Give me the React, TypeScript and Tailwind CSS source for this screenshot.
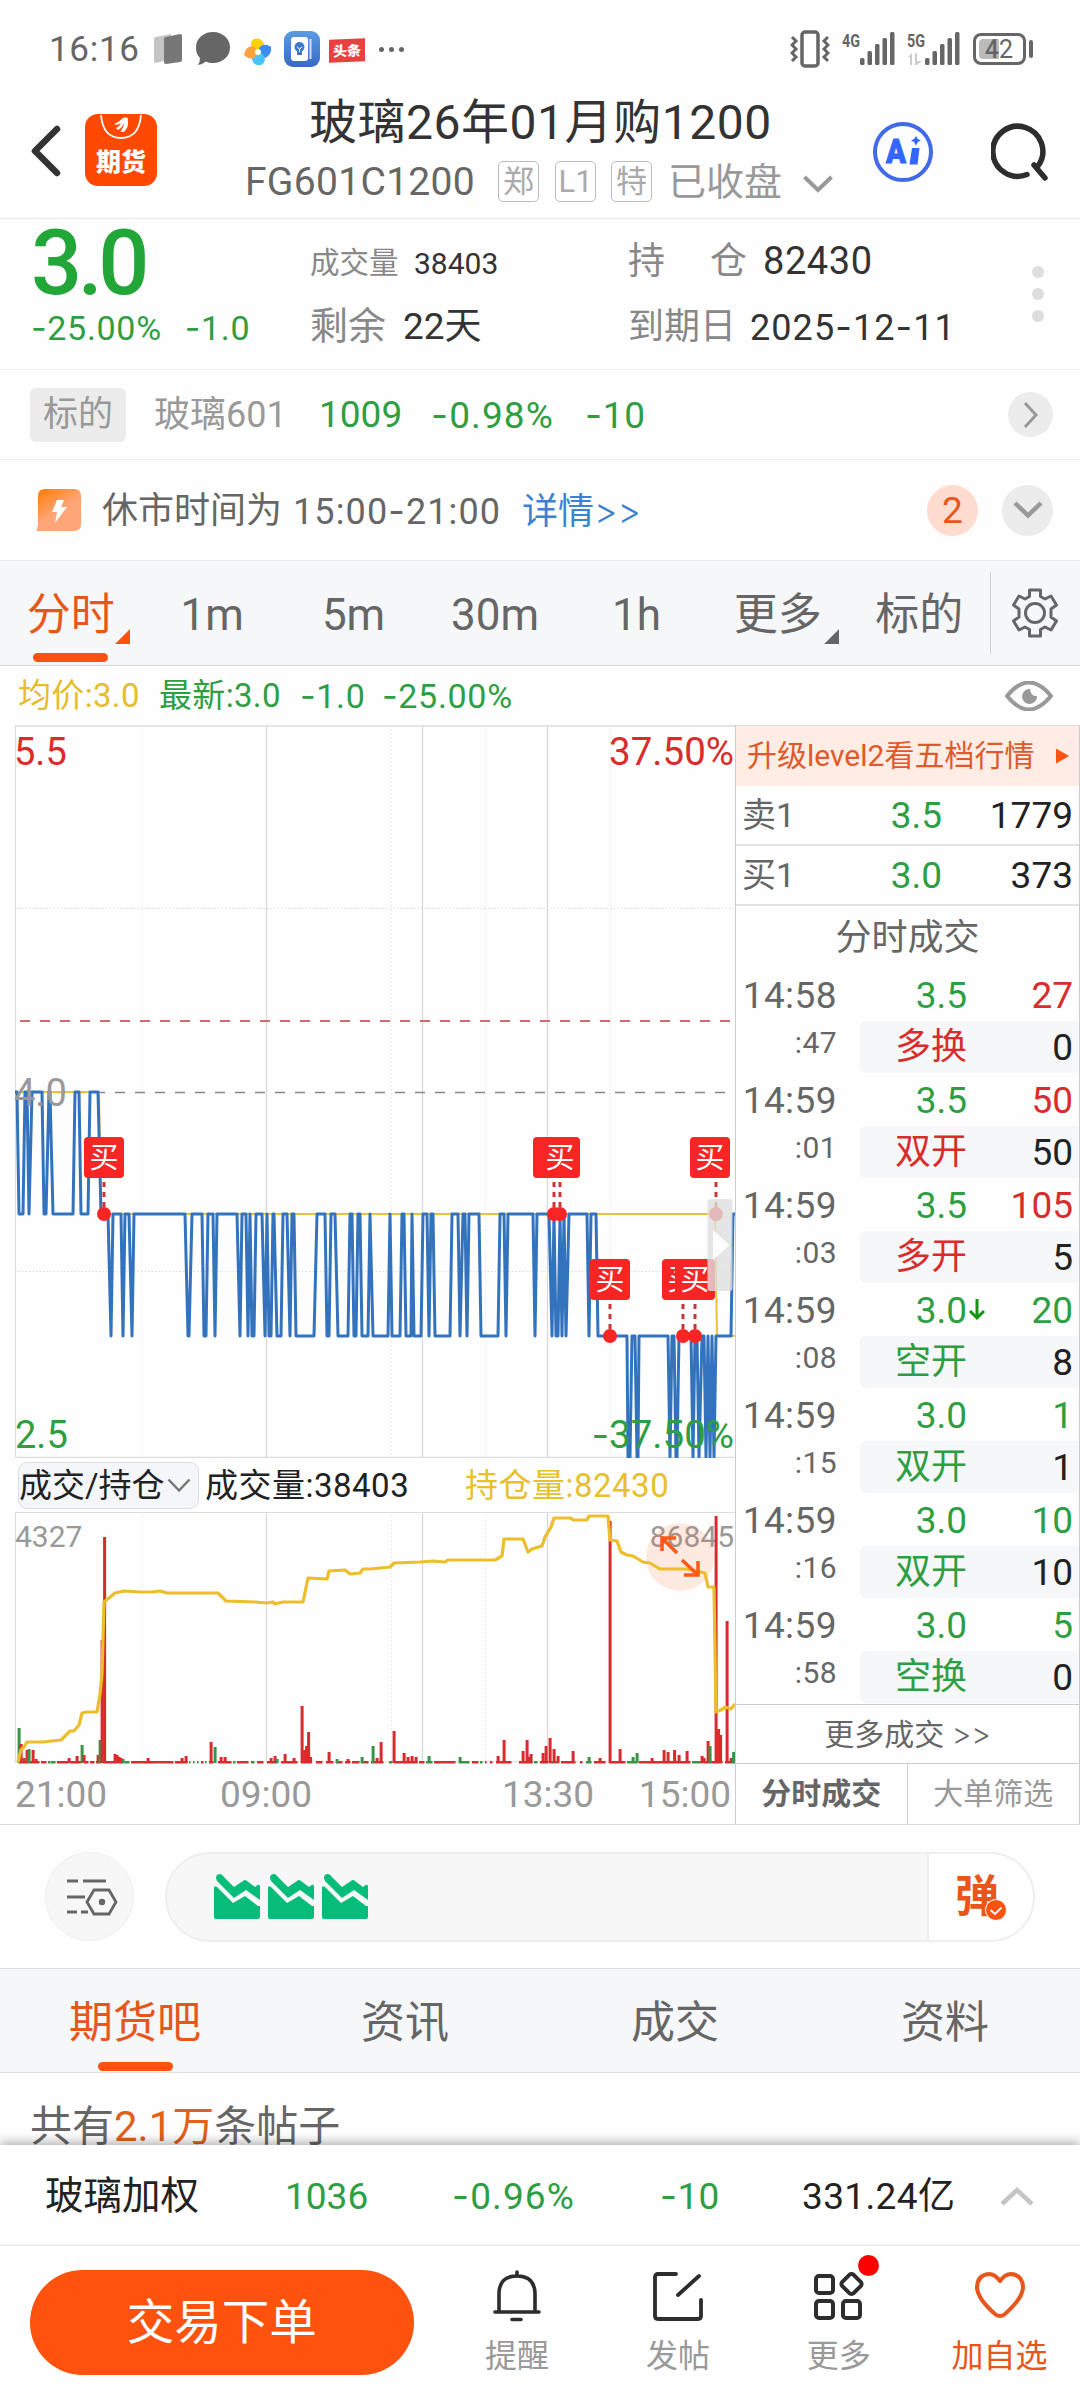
import { Fragment } from "react";

const GREEN = "text-[#2e9e43]";
const RED = "text-[#d92c2c]";

// y of each price level in the price pane
const LEVEL: Record<string, number> = { A: 367, B: 489, C: 611, D: 732 };

const PRICE =
  "15A 17A 19B 23B 25A 27A 29B 32A 42A 44B 46B 49A 50A 53B 73B 75A 79A 81B 88B 90A 98A 101B 108B 111C 113B 121B 123C 125B 129B 132C 134B 185B 188C 189C 192B 202B 204C 206C 208B 213B 215C 217B 237B 240C 242B 246B 248C 250B 252C 254C 256B 262B 265C 267B 269C 271C 273B 274B 277C 281C 283B 287B 290C 292B 294B 296C 314C 317B 325B 327C 329C 331B 335B 338C 348C 350B 352B 354C 356C 358B 360B 362C 368C 370B 373C 388C 390B 392C 400C 402B 404B 406C 411C 412B 414C 421C 423B 427B 429C 431B 433B 435C 450C 452B 458B 460C 463B 465B 467C 469B 479B 481C 498C 500B 504B 506C 508B 533B 535C 537B 549B 552C 554B 556C 558C 560B 562C 564B 566C 569B 587B 589C 591B 596B 598C 627C 628D 630D 632C 635C 637D 638D 639C 668C 670D 672C 674C 676D 677D 679C 691C 693D 695C 697C 699D 702C 704C 706D 708C 710D 712C 714D 716C 731C 733B 735B";

const AVG = "M15 367H99L101 489H715L717 611H735";

const MARKS = [
  { dot: 104, box: 84, level: "B" },
  { dot: 554, box: 533, level: "B" },
  { dot: 560, box: 540, level: "B" },
  { dot: 716, box: 690, level: "B" },
  { dot: 610, box: 590, level: "C" },
  { dot: 683, box: 662, level: "C" },
  { dot: 695, box: 675, level: "C" },
];

// volume bars: [x, height, 1 = green]
const BARS: number[][] = [
  [19, 35, 1], [21, 19], [24, 5], [27, 13], [29, 14, 1], [33, 13], [36, 4], [69, 5], [77, 7], [82, 18, 1], [84, 8], [98, 8],
  [100, 23, 1], [102, 123], [104.5, 226], [115, 9], [117, 8], [119, 6], [121, 5], [123, 4, 1], [148, 5], [182, 5], [186, 7],
  [211, 21], [215, 16, 1], [221, 6], [225, 6], [271, 5], [275, 7], [277, 4, 1], [285, 9], [294, 5], [302, 57], [304.5, 13],
  [306.5, 17], [308.5, 31], [310.5, 6], [329, 11], [337, 4, 1], [348, 4], [362, 6, 1], [373, 17, 1], [377, 5], [381, 21],
  [394, 32], [404, 10], [408, 6], [412, 7], [416, 6], [429, 7, 1], [460, 6, 1], [498, 7], [504, 23], [523, 12], [527, 23],
  [529, 6], [531, 9], [543, 10], [546, 17], [550, 25], [554, 14], [558, 7], [573, 12], [589, 6, 1], [600, 5], [610, 242],
  [620, 14], [633, 6, 1], [637, 10, 1], [652, 5], [664, 13], [668, 11], [674.5, 13], [679, 8], [687, 12], [702, 7],
  [704, 5], [708, 22], [710, 17, 1], [716, 247], [718.5, 34], [720.5, 28], [727, 142], [731, 5], [733.5, 11, 1],
];

// thin base row of tiny volumes: [from, to, 1 = green]
const BASE: number[][] = [
  [19, 39], [41, 46], [48, 50, 1], [51, 55, 1], [57, 68], [70, 81], [84, 88], [90, 94], [96, 101], [103, 124], [125, 129, 1],
  [131, 173], [175, 187], [189, 190, 1], [193, 194, 1], [197, 198, 1], [201, 203], [205, 206, 1], [209, 213], [218, 231],
  [233, 235, 1], [237, 248], [251, 254, 1], [257, 263], [267, 277], [281, 297], [301, 311], [316, 322], [326, 333], [336, 342],
  [345, 350], [352, 359], [361, 368], [371, 383], [389, 392, 1], [394, 417], [419, 424], [426, 432, 1], [434, 455],
  [459, 469, 1], [472, 478], [480, 482, 1], [485, 486], [490, 492], [496, 511], [519, 532], [534, 537, 1], [540, 548],
  [550, 558, 1], [561, 575], [580, 582], [586, 591, 1], [594, 605], [609, 625], [627, 637, 1], [639, 690], [692, 702, 1],
  [704, 722], [725, 735],
];

const OPEN_INTEREST =
  "18,250 21,238 24,235 27,230 43,230 61,228 70,219 74,219 79,213 82,201 87,200 97,200 100,182 102,162 104,90 115,81 124,79 140,80 152,80 160,79 167,81 218,81 226,89 255,90 267,91 273,90 275,92 283,90 303,90 308,66 327,67 329,59 345,58 350,62 360,61 363,57 370,57 390,55 394,51 420,50 433,49 445,50 448,48 495,48 502,44 504,27 523,27 528,40 532,37 542,34 545,25 551,15 554,6 570,6 574,8 587,8 589,4 608,4 610,28 617,29 621,40 627,43 633,44 643,50 650,51 660,57 687,57 705,61 708,75 714,75 716,200 723,197 725,195 731,197 735,192";

const TRADES = [
  { time: "14:58", sec: ":47", price: "3.5", vol: "27", kind: "多换", diff: "0", color: RED },
  { time: "14:59", sec: ":01", price: "3.5", vol: "50", kind: "双开", diff: "50", color: RED },
  { time: "14:59", sec: ":03", price: "3.5", vol: "105", kind: "多开", diff: "5", color: RED },
  { time: "14:59", sec: ":08", price: "3.0", vol: "20", kind: "空开", diff: "8", color: GREEN, down: true },
  { time: "14:59", sec: ":15", price: "3.0", vol: "1", kind: "双开", diff: "1", color: GREEN },
  { time: "14:59", sec: ":16", price: "3.0", vol: "10", kind: "双开", diff: "10", color: GREEN },
  { time: "14:59", sec: ":58", price: "3.0", vol: "5", kind: "空换", diff: "0", color: GREEN },
];

// Roboto's hyphen is too short for signs and dates, so it is set in Inter
function Num({ children }: { children: string }) {
  return (
    <>
      {children.split("-").map((part, i) => (
        <Fragment key={i}>
          {i > 0 && <span className="font-['Inter']">-</span>}
          {part}
        </Fragment>
      ))}
    </>
  );
}

function Signal({ label, arrows }: { label: string; arrows?: boolean }) {
  return (
    <svg width="54" height="36" viewBox="0 0 54 36" fill="#666">
      <text x="0" y="16" fontSize="19" fontWeight="700" textLength="18" lengthAdjust="spacingAndGlyphs" fontFamily="Roboto">
        {label}
      </text>
      {arrows && <path d="M1 26L5 22V34H3V26ZM8 22H10V30H15L10 34H8Z" fill="#ccc" />}
      <rect x="18" y="27" width="4.5" height="7" rx="1.5" />
      <rect x="25.500" y="20" width="4.500" height="14" rx="1.5" />
      <rect x="33" y="13" width="4.500" height="21" rx="1.5" />
      <rect x="40.500" y="7" width="4.500" height="27" rx="1.5" />
      <rect x="48" y="1" width="4.500" height="33" rx="1.5" />
    </svg>
  );
}

function StatusBar() {
  return (
    <div className="flex h-[98px] items-center pl-[49px] text-[#666]">
      <span className="w-[105px] text-[35px] tracking-[0.02em]">16:16</span>
      <svg width="28" height="30" viewBox="0 0 28 30">
        <path d="M2 3L17 0V25L2 29Q0 29 0 27V5Q0 3 2 3Z" fill="#c4c4c4" />
        <path d="M12 3L26 0Q28 0 28 2V26Q28 28 26 28L12 30Q10 30 10 28V5Q10 3 12 3Z" fill="#777" />
      </svg>
      <svg className="ml-[14px]" width="34" height="34" viewBox="0 0 34 34" fill="#666">
        <path d="M17 0C26 0 34 6 34 15.500S26 31 17 31C14 31 12 30.500 10 29.500Q7 32 2 33Q4 30 4 26C1 23 0 20 0 15.500C0 6 8 0 17 0Z" />
      </svg>
      <svg className="mt-[6px] ml-[14px]" width="28" height="28" viewBox="0 0 28 28">
        <path d="M14 14C6 12 5 4 10 1Q17 -1 20 6Q19 10 14 14Z" fill="#ffcf0a" />
        <path d="M14 14C15 6 22 5 27 9Q28 18 20 20Q16 18 14 14Z" fill="#3c8cf5" />
        <path d="M14 14C22 16 23 24 17 27Q9 28 8 21Q9 17 14 14Z" fill="#49c3f8" />
        <path d="M14 14C12 22 5 22 0 17Q1 9 8 8Q12 10 14 14Z" fill="#fba23c" />
        <circle cx="14" cy="14" r="3" fill="#fff" />
      </svg>
      <span className="ml-[12px] flex h-[36px] w-[36px] items-center justify-center rounded-[9px] bg-linear-to-b from-[#5b9be0] to-[#3969c6]">
        <svg width="24" height="26" viewBox="0 0 24 26">
          <rect x="1" y="1" width="17" height="24" rx="3" fill="#fff" />
          <path d="M20.500 3V23" stroke="#cfe0f8" strokeWidth="2" />
          <circle cx="9.500" cy="11" r="5" fill="#3f78d0" />
          <rect x="7" y="15" width="5" height="4" fill="#3f78d0" />
          <path d="M7 11L9.500 13L12 11M9.500 13V16" stroke="#fff" fill="none" />
        </svg>
      </span>
      <span className="mt-[3px] ml-[9px] flex h-[23px] w-[36px] -skew-y-2 items-center justify-center bg-[#e9413f] text-[14px] font-black text-white">头条</span>
      <span className="ml-[14px] flex gap-[5px]">
        <i className="h-[5px] w-[5px] rounded-full bg-[#666]" />
        <i className="h-[5px] w-[5px] rounded-full bg-[#666]" />
        <i className="h-[5px] w-[5px] rounded-full bg-[#666]" />
      </span>
      <svg className="ml-[386px]" width="40" height="38" viewBox="0 0 40 38" fill="none" stroke="#666" strokeWidth="3">
        <rect x="12" y="2" width="16" height="34" rx="3" strokeWidth="3.500" />
        <path d="M2 7L6 11L2 15L6 19L2 23L6 27L2 31M38 7L34 11L38 15L34 19L38 23L34 27L38 31" />
      </svg>
      <span className="ml-[12px] flex gap-[11px]">
        <Signal label="4G" />
        <Signal label="5G" arrows />
      </span>
      <span className="ml-[12px] flex h-[32px] w-[53px] items-center rounded-[8px] border-3 border-[#666] p-[3px]">
        <span className="flex h-[20px] w-[20px] items-center justify-end rounded-l-[4px] bg-[#bbb] text-[25px] font-medium">4</span>
        <span className="text-[25px]">2</span>
      </span>
      <i className="ml-[3px] h-[18px] w-[4px] rounded bg-[#666]" />
    </div>
  );
}

function Header() {
  return (
    <div className="flex h-[121px] border-b border-[#eee]">
      <div className="flex w-[190px] items-start pt-[16px] pl-[30px]">
        <svg className="mt-[10px]" width="32" height="54" viewBox="0 0 32 54" fill="none" stroke="#333" strokeWidth="6.500" strokeLinecap="round" strokeLinejoin="round">
          <path d="M27 5L5 27L27 49" />
        </svg>
        <svg className="ml-[23px]" width="72" height="72" viewBox="0 0 72 72">
          <rect width="72" height="72" rx="13" fill="#ff4800" />
          <path d="M16 1Q18 24 36 24Q54 24 56 1" fill="none" stroke="#fff" strokeWidth="1.800" />
          <path d="M29 10Q34 8 38 4Q43 2 43 6Q44 13 39 18L35 18Q39 13 39 9Q37 14 33 16L31 14Q35 12 36 9Q32 12 29 10Z" fill="#fff" />
          <text x="36" y="57" fontSize="25" fontWeight="900" fill="#fff" textAnchor="middle" fontFamily="Noto Sans CJK SC">
            期货
          </text>
        </svg>
      </div>
      <div className="flex w-[670px] flex-col">
        <div className="mt-px ml-[119px] text-[48px] tracking-[0.011em] text-[#333]">玻璃26年01月购1200</div>
        <div className="mt-[14px] ml-[55px] flex items-center text-[39px] text-[#666]">
          <span className="w-[253px] pt-[2px] tracking-[0.008em]">FG601C1200</span>
          <span className="flex h-[41px] w-[41px] items-center justify-center rounded-[5px] border border-[#bbb] text-[31px] text-[#aaa]">郑</span>
          <span className="ml-[16px] flex h-[41px] w-[41px] items-center justify-center rounded-[5px] border border-[#bbb] text-[31px] text-[#aaa]">L1</span>
          <span className="ml-[15px] flex h-[41px] w-[41px] items-center justify-center rounded-[5px] border border-[#bbb] text-[31px] text-[#aaa]">特</span>
          <span className="ml-[16px] text-[38px] text-[#999]">已收盘</span>
          <svg className="mt-1 ml-[21px]" width="30" height="18" viewBox="0 0 30 18" fill="none" stroke="#999" strokeWidth="4">
            <path d="M1.500 2L15 15L28.500 2" />
          </svg>
        </div>
      </div>
      <svg className="mt-[23px] ml-[13px]" width="60" height="62" viewBox="0 0 60 62">
        <circle cx="30" cy="31" r="28" fill="none" stroke="#4169e8" strokeWidth="4" />
        <text x="13" y="42" fontSize="34" fontWeight="900" fill="#3366ff" stroke="#3366ff" textLength="20" lengthAdjust="spacingAndGlyphs" fontFamily="Roboto">
          A
        </text>
        <path d="M39 27H46.500L44.500 43.500H36.500Z" fill="#3366ff" />
        <path d="M43 15L44.800 18L48 19.500L44.800 21L43 24.500L41 21L38 19.500L41 18Z" fill="#3366ff" />
      </svg>
      <svg className="mt-[24px] ml-[58px]" width="60" height="62" viewBox="0 0 60 62" fill="none" stroke="#2d2d2d" strokeWidth="5.500" strokeLinecap="round">
        <path d="M36 52.500A25 25 0 1 1 47 44M43 43L54 56" />
      </svg>
    </div>
  );
}

function Quote() {
  return (
    <div className="flex h-[151px] border-b border-[#f3f3f3]">
      <div className={`w-[310px] pl-[31px] ${GREEN}`}>
        <div className="h-[89px] text-[90px] font-medium tracking-[-0.05em] text-[#21a637]">3.0</div>
        <div className="mt-[3px] flex gap-[23px] text-[34px] tracking-[0.02em]">
          <span>
            <Num>-25.00%</Num>
          </span>
          <span>
            <Num>-1.0</Num>
          </span>
        </div>
      </div>
      <div className="w-[318px] text-[#333]">
        <div className="mt-[29px] flex h-[32px] items-center text-[30px]">
          <span className="w-[104px] text-[29.500px] text-[#888]">成交量</span>
          38403
        </div>
        <div className="mt-[26px] flex h-[40px] items-center text-[37px]">
          <span className="w-[93px] text-[38px] text-[#888]">剩余</span>
          22天
        </div>
      </div>
      <div className="w-[400px] text-[#333]">
        <div className="mt-[22px] flex h-[40px] items-center text-[38px] tracking-[0.015em]">
          <span className="flex w-[119px] justify-between text-[37px] tracking-normal text-[#888]">
            <span>持</span>
            <span>仓</span>
          </span>
          <span className="ml-[16px]">82430</span>
        </div>
        <div className="mt-[26px] flex h-[40px] items-center text-[36px] tracking-[0.03em]">
          <span className="w-[122px] tracking-normal text-[#888]">到期日</span>
          <span>
            <Num>2025-12-11</Num>
          </span>
        </div>
      </div>
      <div className="mt-[47px] ml-[4px] flex flex-col gap-[10px]">
        <i className="h-[12px] w-[12px] rounded-full bg-[#ddd]" />
        <i className="h-[12px] w-[12px] rounded-full bg-[#ddd]" />
        <i className="h-[12px] w-[12px] rounded-full bg-[#ddd]" />
      </div>
    </div>
  );
}

function Underlying() {
  return (
    <div className={`flex h-[90px] items-center border-b border-[#eee] pl-[30px] text-[37px] ${GREEN}`}>
      <span className="flex h-[54px] w-[96px] items-center justify-center rounded-[6px] bg-[#ececec] text-[35px] text-[#999]">标的</span>
      <span className="ml-[28px] w-[165px] text-[36px] text-[#999]">玻璃601</span>
      <span className="w-[112px]">1009</span>
      <span className="w-[154px] tracking-[0.03em]">
        <Num>-0.98%</Num>
      </span>
      <span className="w-[423px] tracking-[0.02em]">
        <Num>-10</Num>
      </span>
      <span className="flex h-[45px] w-[45px] items-center justify-center rounded-full bg-[#ececec]">
        <svg width="16" height="26" viewBox="0 0 16 26" fill="none" stroke="#999" strokeWidth="3">
          <path d="M2 1L13 13L2 25" />
        </svg>
      </span>
    </div>
  );
}

function Notice() {
  return (
    <div className="flex h-[101px] items-center border-b border-[#eee] pl-[36px] text-[36px] text-[#666]">
      <svg width="46" height="44" viewBox="0 0 46 44">
        <defs>
          <linearGradient id="bolt" x1="0" y1="0" x2="0.7" y2="1">
            <stop offset="0" stopColor="#ff7a00" />
            <stop offset="0.6" stopColor="#ffa678" />
            <stop offset="1" stopColor="#ffa678" />
          </linearGradient>
        </defs>
        <path d="M9 1H38Q45 1 45 8V36Q45 43 38 43H0.500L2 37V8Q2 1 9 1Z" fill="url(#bolt)" />
        <path d="M21 12H28L25 19H31L19 35L21 24H16Z" fill="#fff" />
      </svg>
      <span className="ml-[20px] w-[191px] pt-[2px]">休市时间为</span>
      <span className="w-[229px] pt-[2px] tracking-[0.031em]">
        <Num>15:00-21:00</Num>
      </span>
      <span className="w-[405px] pt-[2px] text-[#3b82d0]">
        详情<span className="font-['Inter'] font-light">&gt;&gt;</span>
      </span>
      <span className="flex h-[51px] w-[51px] items-center justify-center rounded-full bg-[#ffdccf] text-[37px] text-[#e8561c]">2</span>
      <span className="ml-[24px] flex h-[51px] w-[51px] items-center justify-center rounded-full bg-[#ececec]">
        <svg width="30" height="18" viewBox="0 0 30 18" fill="none" stroke="#999" strokeWidth="4.500">
          <path d="M2 2L15 14.500L28 2" />
        </svg>
      </span>
    </div>
  );
}

function PeriodTabs() {
  return (
    <div className="flex h-[105px] items-center border-b border-[#d5d9dd] bg-[#f6f7f9] text-[44px] text-[#666]">
      <div className="grid w-[990px] grid-cols-7 pt-[4px] text-center">
        <span className="relative text-[#e8561c]">
          分时
          <i className="absolute top-[36px] left-[115px] h-[15px] w-[15px] bg-[#ff520f] [clip-path:polygon(100%_0,100%_100%,0_100%)]" />
          <i className="absolute top-[60px] left-[33px] h-[9px] w-[75px] rounded-full bg-[#ff520f]" />
        </span>
        <span>1m</span>
        <span>5m</span>
        <span>30m</span>
        <span>1h</span>
        <span className="relative">
          更多
          <i className="absolute top-[36px] left-[117px] h-[15px] w-[15px] bg-[#666] [clip-path:polygon(100%_0,100%_100%,0_100%)]" />
        </span>
        <span>标的</span>
      </div>
      <i className="h-[82px] w-px bg-[#ccd0d4]" />
      <svg className="ml-[20px]" width="48" height="50" viewBox="0 0 48 50" fill="none" stroke="#666" strokeWidth="3" strokeLinejoin="round">
        <path d="M18.500 2H29.500V8.500L34 11L40 8L45.500 17L40 21V29L45.500 33L40 42L34 39L29.500 41.500V48H18.500V41.500L14 39L8 42L2.500 33L8 29V21L2.500 17L8 8L14 11L18.500 8.500Z" />
        <circle cx="24" cy="25" r="9.500" />
      </svg>
    </div>
  );
}

function AverageBar() {
  return (
    <div className={`flex h-[59px] items-center pl-[18px] text-[33px] ${GREEN}`}>
      <span className="w-[141px] tracking-[0.01em] text-[#e6bd2c]">均价:3.0</span>
      <span className="w-[141px] tracking-[0.01em]">最新:3.0</span>
      <span className="w-[82px] text-[34px] tracking-[0.02em]">
        <Num>-1.0</Num>
      </span>
      <span className="w-[623px] text-[34px] tracking-[0.02em]">
        <Num>-25.00%</Num>
      </span>
      <svg width="48" height="30" viewBox="0 0 48 30">
        <path d="M2 15Q24 -12 46 15Q24 42 2 15Z" fill="none" stroke="#999" strokeWidth="4" strokeLinejoin="round" />
        <path d="M25 8A7.500 7.500 0 1 0 32 15Q26 16 25 8Z" fill="#999" />
      </svg>
    </div>
  );
}

function Grid({ height }: { height: number }) {
  return (
    <g>
      <path d={`M266.500 0V${height}M422.500 0V${height}M547.500 0V${height}`} stroke="#d9d9d9" strokeWidth="1.300" />
      <path d={`M142 0V${height}M391.500 0V${height}M485.500 0V${height}M610.500 0V${height}`} stroke="#e6e6e6" strokeDasharray="1.500 2.500" />
      <path d={`M15.500 0V${height}`} stroke="#ddd" />
    </g>
  );
}

function PriceChart() {
  const line = PRICE.split(" ")
    .map((p) => `${p.slice(0, -1)},${LEVEL[p.slice(-1)]}`)
    .join(" ");
  return (
    <svg className="block" width="735" height="733" viewBox="0 0 735 733" fill="none" fontFamily="Roboto, 'Noto Sans CJK SC', sans-serif">
      <Grid height={733} />
      <path d="M15 1H735M15 732.500H735" stroke="#ddd" strokeWidth="1.500" />
      <path d="M15 183.500H735M15 546.500H735" stroke="#ddd" strokeDasharray="1.500 2" />
      <path d="M20 296H735" stroke="#d46a70" strokeWidth="2" strokeDasharray="10 10" />
      <path d="M35 367.500H735" stroke="#888" strokeWidth="1.500" strokeDasharray="10 10" />
      <path d={AVG} stroke="#e8c33c" strokeWidth="2" />
      <polyline points={line} stroke="#3373bd" strokeWidth="3" strokeLinejoin="round" />
      <text x="14" y="381" fontSize="38" fill="#999">4.0</text>
      <text x="14" y="40" fontSize="38" fill="#d92c2c">5.5</text>
      <text x="734" y="40" fontSize="38.500" fill="#d92c2c" textAnchor="end">37.50%</text>
      <text x="15" y="723" fontSize="38" fill="#2e9e43">2.5</text>
      <text x="734" y="723" fontSize="38.500" fill="#2e9e43" textAnchor="end">
        <tspan fontFamily="Inter">-</tspan>37.50%
      </text>
      {MARKS.map((m) => {
        const y = LEVEL[m.level];
        return (
          <g key={m.dot}>
            <path d={`M${m.dot} ${y - 32}V${y - 7}`} stroke="#c93438" strokeWidth="3" strokeDasharray="5 5" />
            <circle cx={m.dot} cy={y} r="7" fill="#f92424" />
            <rect x={m.box} y={y - 77} width="40" height="41" rx="4" fill="#f92424" />
            <text x={m.box + 20} y={y - 46} fontSize="29" fill="#fff" textAnchor="middle">
              买
            </text>
          </g>
        );
      })}
      <rect x="707.500" y="474" width="25" height="92" rx="3" fill="#dedede" fillOpacity="0.8" />
      <path d="M713 505L729.500 520L713 535Z" fill="#fff" fillOpacity="0.9" />
    </svg>
  );
}

function VolumeChart() {
  return (
    <svg className="block" width="735" height="312" viewBox="0 0 735 312" fill="none" fontFamily="Roboto, sans-serif">
      <Grid height={251} />
      <path d="M15 0.500H735" stroke="#ddd" />
      <path d="M15 250H735" stroke="#ddd" />
      <text x="15" y="35" fontSize="30" fill="#999">4327</text>
      <text x="734" y="35" fontSize="30" fill="#999" textAnchor="end">86845</text>
      {BASE.map(([from, to, green]) => (
        <rect key={from} x={from} y="249" width={to - from + 0.5} height="2.500" fill={green ? "#3a9447" : "#d12f33"} />
      ))}
      {BARS.map(([x, h, green]) => (
        <rect key={x} x={x - 1.4} y={251 - h} width="3" height={h} fill={green ? "#3a9447" : "#d92b2e"} />
      ))}
      <circle cx="680" cy="45" r="34" fill="#ff6a33" fillOpacity="0.14" />
      <polyline points={OPEN_INTEREST} stroke="#eebd2b" strokeWidth="3.200" strokeLinejoin="round" />
      <path d="M677 41L662 26M662 39V26H676M682 48L698 63M698 49V63H684" stroke="#fb5a17" strokeWidth="3.500" />
      <g fontSize="37" fill="#999">
        <text x="15" y="295">21:00</text>
        <text x="266" y="295" textAnchor="middle">09:00</text>
        <text x="548" y="295" textAnchor="middle">13:30</text>
        <text x="731" y="295" textAnchor="end">15:00</text>
      </g>
    </svg>
  );
}

function IndicatorBar() {
  return (
    <div className="flex h-[54px] items-center pl-[18px] text-[33px] text-[#222]">
      <span className="flex h-[47px] w-[181px] items-center rounded-[9px] border border-[#dadde5] bg-[#f5f6f9]">
        成交/持仓
        <svg className="ml-[2px]" width="24" height="15" viewBox="0 0 24 15" fill="none" stroke="#777" strokeWidth="2.500">
          <path d="M1.500 1.500L12 12.500L22.500 1.500" />
        </svg>
      </span>
      <span className="ml-[6px] w-[260px] tracking-[0.015em]">成交量:38403</span>
      <span className="tracking-[0.015em] text-[#e8c02c]">持仓量:82430</span>
    </div>
  );
}

function OrderBook() {
  return (
    <div className="flex w-[345px] flex-col border-x border-[#ccc] text-[#666]">
      <div className="flex h-[61px] items-center justify-between border-t border-[#ddd] bg-[#ffece4] pr-[10px] pl-[11px] text-[30px] text-[#e0592a]">
        升级level2看五档行情
        <i className="h-[15px] w-[13px] bg-[#ff520f] [clip-path:polygon(0_0,100%_50%,0_100%)]" />
      </div>
      <div className="flex h-[60px] items-center border-b-2 border-[#e2e2e2] pr-[6px] pl-[6px] text-[37px]">
        <span className="w-[100px] text-[34px]">卖1</span>
        <span className={`w-[100px] text-right ${GREEN}`}>3.5</span>
        <span className="flex-1 text-right text-[#222]">1779</span>
      </div>
      <div className="flex h-[60px] items-center border-b-2 border-[#e2e2e2] pr-[6px] pl-[6px] text-[37px]">
        <span className="w-[100px] text-[34px]">买1</span>
        <span className={`w-[100px] text-right ${GREEN}`}>3.0</span>
        <span className="flex-1 text-right text-[#222]">373</span>
      </div>
      <div className="flex h-[63px] items-center justify-center text-[36px]">分时成交</div>
      {TRADES.map((t) => (
        <div key={t.sec} className="flex h-[105px]">
          <div className="w-[101px] pt-[8px] text-right text-[37px] tracking-[0.012em]">
            {t.time}
            <div className="mt-[14px] text-[30px]">{t.sec}</div>
          </div>
          <div className="ml-[23px] flex-1 text-[37px]">
            <div className="relative flex h-[52px] items-center pr-[6px]">
              <span className={`w-[107px] text-right ${GREEN}`}>{t.price}</span>
              {t.down && (
                <svg className="absolute left-[108px]" width="18" height="22" viewBox="0 0 18 22" fill="none" stroke="#149414" strokeWidth="3">
                  <path d="M9 0V19M2 12L9 19L16 12" />
                </svg>
              )}
              <span className={`flex-1 text-right ${t.color}`}>{t.vol}</span>
            </div>
            <div className="flex h-[52px] items-center rounded-l-[6px] bg-[#f6f7f9] pr-[6px]">
              <span className={`w-[107px] text-right text-[36px] ${t.color}`}>{t.kind}</span>
              <span className="flex-1 text-right text-[#222]">{t.diff}</span>
            </div>
          </div>
        </div>
      ))}
      <div className="flex h-[59px] items-center justify-center border-t border-[#ccc] text-[30px]">
        <span>
          更多成交 <span className="font-['Inter'] font-light">&gt;&gt;</span>
        </span>
      </div>
      <div className="flex h-[61px] border-t border-[#ccc] text-[30px]">
        <span className="flex w-1/2 items-center justify-center border-r border-[#ccc] font-bold">分时成交</span>
        <span className="flex w-1/2 items-center justify-center text-[#999]">大单筛选</span>
      </div>
    </div>
  );
}

function FallingChart() {
  return (
    <svg width="46" height="46" viewBox="0 0 46 46" fill="#05bd78">
      <path d="M0 14Q0 11 3 13L19 29L31 22L44 32L46 32V43Q46 45 44 45H2Q0 45 0 43Z" />
      <path d="M2 4Q2 0 6 0Q8 0 10 3L20 13L29 7Q31 5 33 7L41 13Q46 8 46 13V26L32 16L20 24L3 7Z" />
    </svg>
  );
}

function ChatBar() {
  return (
    <div className="flex h-[144px] items-center border-t border-[#ddd] pl-[45px]">
      <span className="flex h-[89px] w-[89px] items-center justify-center rounded-full border border-[#eee] bg-[#f7f7f7]">
        <svg className="ml-[5px]" width="52" height="40" viewBox="0 0 52 40" fill="none" stroke="#666" strokeWidth="2.800">
          <path d="M1 4H12M17 4H40M1 20H19M1 35H11M15 35H22" />
          <path d="M21 25L28 13H43L50 25L43 37H28Z" />
          <circle cx="36" cy="25" r="1.800" fill="#666" />
        </svg>
      </span>
      <div className="ml-[31px] flex h-[90px] w-[870px] items-center overflow-hidden rounded-full border-2 border-[#eee] bg-[#f7f7f7] pl-[47px]">
        <span className="flex w-[713px] gap-[8px]">
          <FallingChart />
          <FallingChart />
          <FallingChart />
        </span>
        <span className="relative flex h-[86px] flex-1 items-center border-l-2 border-[#eee] bg-white pl-[26px] text-[44px] font-bold text-[#e8561c]">
          弹
          <svg className="absolute top-[45px] left-[56px]" width="22" height="22" viewBox="0 0 22 22">
            <circle cx="11" cy="11" r="10.500" fill="#ff520f" stroke="#fff" />
            <path d="M5.500 11L10 15L16.500 8.500" fill="none" stroke="#fff" strokeWidth="1.800" />
          </svg>
        </span>
      </div>
    </div>
  );
}

function ContentTabs() {
  return (
    <div className="grid h-[105px] grid-cols-4 items-center border-y border-[#dcdfe3] bg-[#f6f7f9] pt-[5px] text-center text-[44px] text-[#666]">
      <span className="relative text-[#e8561c]">
        期货吧
        <i className="absolute top-[61px] left-[98px] h-[9px] w-[75px] rounded-full bg-[#ff520f]" />
      </span>
      <span>资讯</span>
      <span>成交</span>
      <span>资料</span>
    </div>
  );
}

function BottomBar() {
  return (
    <div className="relative bg-white shadow-[0_-3px_10px_rgba(0,0,0,0.3)]">
      <div className={`flex h-[101px] items-center border-b-2 border-[#eee] pt-[3px] pl-[45px] text-[37px] ${GREEN}`}>
        <span className="w-[240px] text-[38.500px] text-[#222]">玻璃加权</span>
        <span className="w-[167px]">1036</span>
        <span className="w-[208px] tracking-[0.03em]">
          <Num>-0.96%</Num>
        </span>
        <span className="w-[142px] tracking-[0.01em]">
          <Num>-10</Num>
        </span>
        <span className="w-[198px] tracking-[0.01em] text-[#222]">331.24亿</span>
        <svg width="34" height="20" viewBox="0 0 34 20" fill="none" stroke="#c4c4c4" strokeWidth="4.500">
          <path d="M2 18L17 4L32 18" />
        </svg>
      </div>
      <div className="flex h-[154px] pl-[30px] text-[32px] text-[#999]">
        <button className="mt-[24px] flex h-[105px] w-[384px] items-center justify-center rounded-full bg-[#ff520f] pt-[2px] text-[47.500px] text-white">交易下单</button>
        <div className="ml-[23px] grid w-[644px] grid-cols-4">
          <div className="flex flex-col items-center pt-[24px]">
            <svg width="50" height="52" viewBox="0 0 50 52" fill="none" stroke="#2d2d2d" strokeWidth="3.600" strokeLinecap="round">
              <path d="M25 2V6M3 42H47M7 41V24Q7 6 25 6T43 24V41M20 49.500H29" />
            </svg>
            <span className="mt-[18px]">提醒</span>
          </div>
          <div className="flex flex-col items-center pt-[24px]">
            <svg width="50" height="52" viewBox="0 0 50 52" fill="none" stroke="#2d2d2d" strokeWidth="3.800" strokeLinecap="round" strokeLinejoin="round">
              <path d="M23 4H5Q2 4 2 7V46Q2 49 5 49H45Q48 49 48 46V30M46 6L25 25" />
            </svg>
            <span className="mt-[18px]">发帖</span>
          </div>
          <div className="relative flex flex-col items-center pt-[24px]">
            <svg width="50" height="52" viewBox="0 0 50 52" fill="none" stroke="#2d2d2d" strokeWidth="4">
              <rect x="2" y="6" width="17" height="17" rx="3" />
              <rect x="2" y="31" width="17" height="17" rx="3" />
              <rect x="29" y="31" width="17" height="17" rx="3" />
              <rect x="29.500" y="6" width="16" height="16" rx="3" transform="rotate(45 37.500 14)" />
            </svg>
            <i className="absolute top-[9px] left-[100px] h-[21px] w-[21px] rounded-full bg-[#f00]" />
            <span className="mt-[18px]">更多</span>
          </div>
          <div className="flex flex-col items-center pt-[24px]">
            <svg width="52" height="52" viewBox="0 0 52 52" fill="none" stroke="#e8561c" strokeWidth="4" strokeLinejoin="round">
              <path d="M26 11Q21 4 15 4Q3 5 3 18Q4 29 21 44Q26 48 31 44Q48 29 49 18Q49 5 37 4Q31 4 26 11Z" />
            </svg>
            <span className="mt-[18px] text-[#e8561c]">加自选</span>
          </div>
        </div>
      </div>
    </div>
  );
}

export default function App() {
  return (
    <div className="h-[2400px] w-[1080px] overflow-hidden bg-[#fefefe] font-['Roboto','Noto_Sans_CJK_SC',sans-serif] leading-none whitespace-nowrap">
      <StatusBar />
      <Header />
      <Quote />
      <Underlying />
      <Notice />
      <PeriodTabs />
      <AverageBar />
      <div className="flex h-[1099px]">
        <div className="w-[735px]">
          <PriceChart />
          <IndicatorBar />
          <VolumeChart />
        </div>
        <OrderBook />
      </div>
      <ChatBar />
      <ContentTabs />
      <div className="h-[72px] overflow-hidden pt-[33px] pl-[30px] text-[42px] text-[#666]">
        共有<span className="text-[#e0601c]">2.1万</span>条帖子
      </div>
      <BottomBar />
    </div>
  );
}
